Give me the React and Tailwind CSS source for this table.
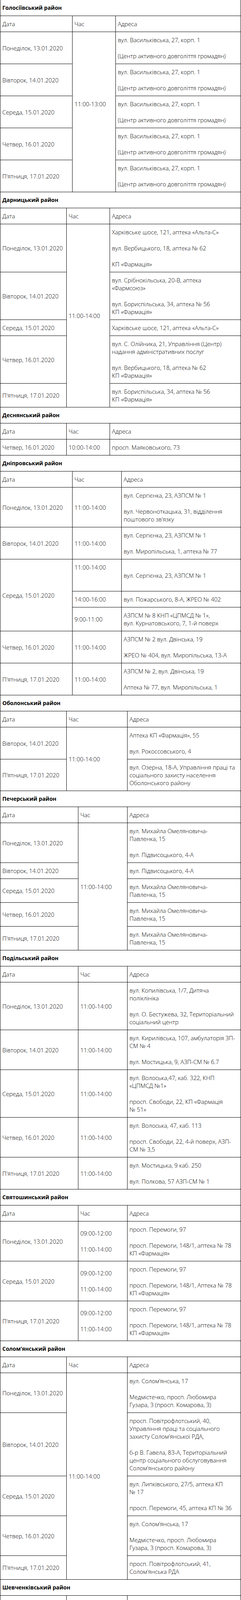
import React from "react";

function Lines({ text }) {
  const parts = text.split("\n");
  return (
    <>
      {parts.map((t, i) => (
        <React.Fragment key={i}>
          {i > 0 && <br />}
          {t}
        </React.Fragment>
      ))}
    </>
  );
}

function Ps({ items }) {
  return (
    <div className="flex flex-col gap-[21px]">
      {items.map((t, i) => (
        <p key={i}>
          <Lines text={t} />
        </p>
      ))}
    </div>
  );
}

function Td({ children, rowSpan, shift }) {
  return (
    <td
      rowSpan={rowSpan}
      className={
        shift
          ? "border border-black px-[5px] pt-[10px] pb-[51px] align-middle"
          : "border border-black px-[5px] pt-[10px] pb-[10px] align-middle"
      }
    >
      {children}
    </td>
  );
}

function District({ title, c1, c2, children }) {
  return (
    <table className="w-full table-fixed border-collapse text-[15px] leading-[20px] font-light text-black font-['Open_Sans',sans-serif]">
      <colgroup>
        <col style={{ width: c1 }} />
        <col style={{ width: c2 }} />
        <col />
      </colgroup>
      <tbody>
        <tr>
          <td colSpan={3} className="border border-t-0 border-black px-[5px] pt-[10px] pb-[10px] text-[14px] font-bold">
            {title}
          </td>
        </tr>
        <tr>
          <Td>Дата</Td>
          <Td>Час</Td>
          <Td>Адреса</Td>
        </tr>
        {children}
      </tbody>
    </table>
  );
}

const GOL = ["вул. Васильківська, 27, корп. 1", "(Центр активного довголіття громадян)"];
const PAV = ["вул. Михайла Омеляновича-\nПавленка, 15"];
const SOL1 = ["вул. Солом’янська, 17", "Медмістечко, просп. Любомира\nГузара, 3 (просп. Комарова, 3)"];
const SV = ["09:00-12:00", "11:00-14:00"];

export default function App() {
  return (
    <div className="w-[618px] bg-white text-black font-['Open_Sans',sans-serif]">
      <District title="Голосіївський район" c1={185} c2={111}>
        <tr>
          <Td>Понеділок, 13.01.2020</Td>
          <Td rowSpan={5} shift>11:00-13:00</Td>
          <Td><Ps items={GOL} /></Td>
        </tr>
        <tr><Td>Вівторок, 14.01.2020</Td><Td><Ps items={GOL} /></Td></tr>
        <tr><Td>Середа, 15.01.2020</Td><Td><Ps items={GOL} /></Td></tr>
        <tr><Td>Четвер, 16.01.2020</Td><Td><Ps items={GOL} /></Td></tr>
        <tr><Td>П'ятниця, 17.01.2020</Td><Td><Ps items={GOL} /></Td></tr>
      </District>

      <District title="Дарницький район" c1={170} c2={111}>
        <tr>
          <Td>Понеділок, 13.01.2020</Td>
          <Td rowSpan={5}>11:00-14:00</Td>
          <Td><Ps items={["Харківське шосе, 121, аптека «Альта-С»", "вул. Вербицького, 18, аптека № 62", "КП «Фармація»"]} /></Td>
        </tr>
        <tr><Td>Вівторок, 14.01.2020</Td><Td><Ps items={["вул. Срібнокільська, 20-В, аптека\n«Фармсоюз»", "вул. Бориспільська, 34, аптека № 56\nКП «Фармація»"]} /></Td></tr>
        <tr><Td>Середа, 15.01.2020</Td><Td><Ps items={["Харківське шосе, 121, аптека «Альта-С»"]} /></Td></tr>
        <tr><Td>Четвер, 16.01.2020</Td><Td><Ps items={["вул. С. Олійника, 21, Управління (Центр)\nнадання адміністративних послуг", "вул. Вербицького, 18, аптека № 62\nКП «Фармація»"]} /></Td></tr>
        <tr><Td>П'ятниця, 17.01.2020</Td><Td><Ps items={["вул. Бориспільська, 34, аптека № 56\nКП «Фармація»"]} /></Td></tr>
      </District>

      <District title="Деснянський район" c1={170} c2={111}>
        <tr><Td>Четвер, 16.01.2020</Td><Td>10:00-14:00</Td><Td>просп. Маяковського, 73</Td></tr>
      </District>

      <District title="Дніпровський район" c1={185} c2={126}>
        <tr><Td>Понеділок, 13.01.2020</Td><Td>11:00-14:00</Td><Td><Ps items={["вул. Сергієнка, 23, АЗПСМ № 1", "вул. Червоноткацька, 31, відділення\nпоштового зв'язку"]} /></Td></tr>
        <tr><Td>Вівторок, 14.01.2020</Td><Td>11:00-14:00</Td><Td><Ps items={["вул. Сергієнка, 23, АЗПСМ № 1", "вул. Миропільська, 1, аптека № 77"]} /></Td></tr>
        <tr><Td rowSpan={3}>Середа, 15.01.2020</Td><Td shift>11:00-14:00</Td><Td>вул. Сергієнка, 23, АЗПСМ № 1</Td></tr>
        <tr><Td>14:00-16:00</Td><Td>вул. Пожарського, 8-А, ЖРЕО № 402</Td></tr>
        <tr><Td>9:00-11:00</Td><Td><Ps items={["АЗПСМ № 8 КНП «ЦПМСД № 1»,\nвул. Курнатовського, 7, 1-й поверх"]} /></Td></tr>
        <tr><Td>Четвер, 16.01.2020</Td><Td>11:00-14:00</Td><Td><Ps items={["АЗПСМ № 2 вул. Двінська, 19", "ЖРЕО № 404, вул. Миропільська, 13-А"]} /></Td></tr>
        <tr><Td>П'ятниця, 17.01.2020</Td><Td>11:00-14:00</Td><Td><Ps items={["АЗПСМ № 2, вул. Двінська, 19", "Аптека № 77, вул. Миропільська, 1"]} /></Td></tr>
      </District>

      <District title="Оболонський район" c1={170} c2={156}>
        <tr><Td>Вівторок, 14.01.2020</Td><Td rowSpan={2}>11:00-14:00</Td><Td><Ps items={["Аптека КП «Фармація», 55", "вул. Рокоссовського, 4"]} /></Td></tr>
        <tr><Td>П'ятниця, 17.01.2020</Td><Td><Ps items={["вул. Озерна, 18-А, Управління праці та\nсоціального захисту населення\nОболонського району"]} /></Td></tr>
      </District>

      <District title="Печерський район" c1={200} c2={126}>
        <tr><Td>Понеділок, 13.01.2020</Td><Td rowSpan={5}>11:00-14:00</Td><Td><Ps items={["вул. Михайла Омеляновича-\nПавленка, 15", "вул. Підвисоцького, 4-А"]} /></Td></tr>
        <tr><Td>Вівторок, 14.01.2020</Td><Td>вул. Підвисоцького, 4-А</Td></tr>
        <tr><Td>Середа, 15.01.2020</Td><Td><Ps items={PAV} /></Td></tr>
        <tr><Td>Четвер, 16.01.2020</Td><Td><Ps items={PAV} /></Td></tr>
        <tr><Td>П'ятниця, 17.01.2020</Td><Td><Ps items={PAV} /></Td></tr>
      </District>

      <District title="Подільський район" c1={200} c2={126}>
        <tr><Td>Понеділок, 13.01.2020</Td><Td>11:00-14:00</Td><Td><Ps items={["вул. Копилівська, 1/7, Дитяча\nполіклініка", "вул. О. Бестужева, 32, Територіальний\nсоціальний центр"]} /></Td></tr>
        <tr><Td>Вівторок, 14.01.2020</Td><Td>11:00-14:00</Td><Td><Ps items={["вул. Кирилівська, 107, амбулаторія ЗП-\nСМ № 4", "вул. Мостицька, 9, АЗП-СМ № 6.7"]} /></Td></tr>
        <tr><Td>Середа, 15.01.2020</Td><Td>11:00-14:00</Td><Td><Ps items={["вул. Волоська,47, каб. 322, КНП\n«ЦПМСД №1»", "просп. Свободи, 22, КП «Фармація\n№ 51»"]} /></Td></tr>
        <tr><Td>Четвер, 16.01.2020</Td><Td>11:00-14:00</Td><Td><Ps items={["вул. Волоська, 47, каб. 113", "просп. Свободи, 22, 4-й поверх, АЗП-\nСМ № 3,5"]} /></Td></tr>
        <tr><Td>П'ятниця, 17.01.2020</Td><Td>11:00-14:00</Td><Td><Ps items={["вул. Мостицька, 9 каб. 250", "вул. Полкова, 57 АЗП-СМ № 1"]} /></Td></tr>
      </District>

      <District title="Святошинський район" c1={200} c2={126}>
        <tr><Td>Понеділок, 13.01.2020</Td><Td><Ps items={SV} /></Td><Td><Ps items={["просп. Перемоги, 97", "просп. Перемоги, 148/1, аптека № 78\nКП «Фармація»"]} /></Td></tr>
        <tr><Td>Середа, 15.01.2020</Td><Td><Ps items={SV} /></Td><Td><Ps items={["просп. Перемоги, 97", "просп. Перемоги, 148/1, Аптека № 78\nКП «Фармація»"]} /></Td></tr>
        <tr><Td>П'ятниця, 17.01.2020</Td><Td><Ps items={SV} /></Td><Td><Ps items={["просп. Перемоги, 97", "просп. Перемоги, 148/1, аптека № 78\nКП «Фармація»"]} /></Td></tr>
      </District>

      <District title="Солом’янський район" c1={170} c2={156}>
        <tr><Td>Понеділок, 13.01.2020</Td><Td rowSpan={5}>11:00-14:00</Td><Td><Ps items={SOL1} /></Td></tr>
        <tr><Td>Вівторок, 14.01.2020</Td><Td><Ps items={["просп. Повітрофлотський, 40,\nУправління праці та соціального\nзахисту Солом'янської РДА,", "б-р В. Гавела, 83-А, Територіальний\nцентр соціального обслуговування\nСолом'янського району"]} /></Td></tr>
        <tr><Td>Середа, 15.01.2020</Td><Td><Ps items={["вул. Липківського, 27/5, аптека КП\n№ 17", "просп. Перемоги, 45, аптека КП № 36"]} /></Td></tr>
        <tr><Td>Четвер, 16.01.2020</Td><Td><Ps items={SOL1} /></Td></tr>
        <tr><Td>П'ятниця, 17.01.2020</Td><Td><Ps items={["просп. Повітрофлотський, 41,\nСолом'янська РДА"]} /></Td></tr>
      </District>

      <District title="Шевченківський район" c1={170} c2={156}>
        <tr><Td>Понеділок, 13.01.2020</Td><Td>10:00-13:00</Td><Td><Ps items={["вул. Д. Щербаківського, 60, аптека\n№ 130 КП «Фармація»", "КНП ЦПМСД № 3"]} /></Td></tr>
        <tr><Td>Вівторок, 14.01.2020</Td><Td>10:00-13:00</Td><Td><Ps items={["вул. Б. Хмельницького, 24", "(Шевченківська РДА), КНП ЦПМСД\n№ 1"]} /></Td></tr>
        <tr><Td>Середа, 15.01.2020</Td><Td>10:00-13:00</Td><Td><Ps items={["вул. Січових Стрільців, 10", "КП «Фармація», аптека № 7", "КНП ЦПМСД № 2"]} /></Td></tr>
        <tr><Td>Четвер, 16.01.2020</Td><Td>10:00-13:00</Td><Td><Ps items={["вул. Б. Хмельницького, 24", "(Шевченківська РДА), КНП ЦПМСД\n№ 3"]} /></Td></tr>
        <tr><Td>П'ятниця, 17.01.2020</Td><Td>10:00-13:00</Td><Td><Ps items={["вул. Ісаакяна, 2, аптека № 90, КП\n«Фармація»,", "\u00a0КНП ЦПМСД № 1"]} /></Td></tr>
      </District>
    </div>
  );
}
